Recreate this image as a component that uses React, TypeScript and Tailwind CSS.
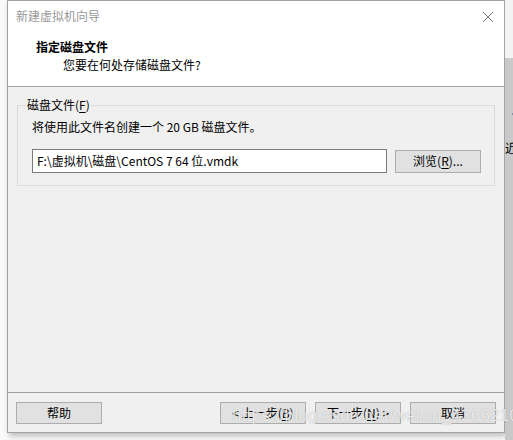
const font = { fontFamily: '"Noto Sans CJK SC", "Noto Sans", sans-serif' }

function Btn({ children, className = '' }: { children: React.ReactNode; className?: string }) {
  return (
    <div
      className={
        'h-[22px] w-[86px] flex items-center justify-center border border-[#adadad] bg-[#e1e1e1] text-[12px] leading-none text-black ' +
        className
      }
    >
      {children}
    </div>
  )
}

function Key({ k }: { k: string }) {
  return <span className="underline underline-offset-2">{k}</span>
}

export default function App() {
  return (
    <div className="relative w-[513px] h-[440px] overflow-hidden bg-[#fafafa] flex" style={font}>
      <div className="w-[7px] shrink-0" />

      {/* dialog */}
      <div className="w-[498px] h-[433px] shrink-0 flex flex-col border border-[#a3a3a3] bg-[#f0f0f0] shadow-[2px_3px_6px_rgba(0,0,0,0.25)]">
        <div className="bg-white h-[86px] flex flex-col border-b border-[#a0a0a0]">
          <div className="h-[30px] flex items-center justify-between pl-[8px] pr-[10px]">
            <span className="text-[12px] text-[#999999] leading-none">新建虚拟机向导</span>
            <svg width="12" height="12" viewBox="0 0 12 12" className="mt-[1px]">
              <path d="M1 1 L11 11 M11 1 L1 11" stroke="#7a7a7a" strokeWidth="1" />
            </svg>
          </div>
          <div className="pl-[28px] pt-[8px] text-[12px] font-bold leading-[16px] text-black">指定磁盘文件</div>
          <div className="pl-[55px] pt-[2px] text-[12px] leading-[16px] text-black">您要在何处存储磁盘文件?</div>
        </div>

        <div className="flex-1 flex flex-col px-[9px] pt-[18px]">
          <div className="relative h-[81px] border border-[#dcdcdc] flex flex-col pl-[14px]">
            <span className="absolute -top-[9px] left-[8px] bg-[#f0f0f0] px-[1px] text-[12px] leading-[16px] text-black">
              磁盘文件(<Key k="F" />)
            </span>
            <div className="pt-[13px] text-[12px] leading-[16px] text-black">将使用此文件名创建一个 20 GB 磁盘文件。</div>
            <div className="mt-[14px] flex items-center gap-[8px]">
              <div className="w-[355px] h-[24px] border border-[#7a7a7a] bg-white flex items-center pl-[4px] text-[12px] leading-none text-black">
                F:\虚拟机\磁盘\CentOS 7 64 位.vmdk
              </div>
              <Btn className="w-[85px] h-[23px]">
                浏览(<Key k="R" />)...
              </Btn>
            </div>
          </div>
        </div>

        <div className="h-[40px] border-t border-[#a0a0a0] flex items-start pt-[9px] px-[8px]">
          <Btn>帮助</Btn>
          <div className="flex-1" />
          <div className="flex gap-[9px] pr-[0px]">
            <Btn>
              &lt; 上一步(<Key k="B" />)
            </Btn>
            <Btn>
              下一步(<Key k="N" />) &gt;
            </Btn>
            <Btn>取消</Btn>
          </div>
        </div>
      </div>

      {/* desktop behind */}
      <div className="flex-1 flex flex-col">
        <div className="h-[58px] bg-[#f4f4f4]" />
        <div className="flex-1 bg-[#c9c9c9] flex flex-col items-end">
          <div className="mt-[31px] w-[4px] h-[3px] bg-[#3f5f7f]" />
          <div className="mt-[17px] w-0 h-0 border-y-[5px] border-y-transparent border-r-[5px] border-r-[#3f5f7f]" />
          <div className="mt-[23px] text-[12px] leading-none text-black">近</div>
        </div>
      </div>

      {/* watermark */}
      <div
        className="absolute left-[232px] top-[407px] text-[17px] leading-none text-white/80 tracking-[0.2px]"
        style={{ fontFamily: '"Liberation Sans", Arial, sans-serif', textShadow: '0 0 1px rgba(0,0,0,0.35)' }}
      >
        https://blog.csdn.net/weixin_43662106
      </div>
    </div>
  )
}
